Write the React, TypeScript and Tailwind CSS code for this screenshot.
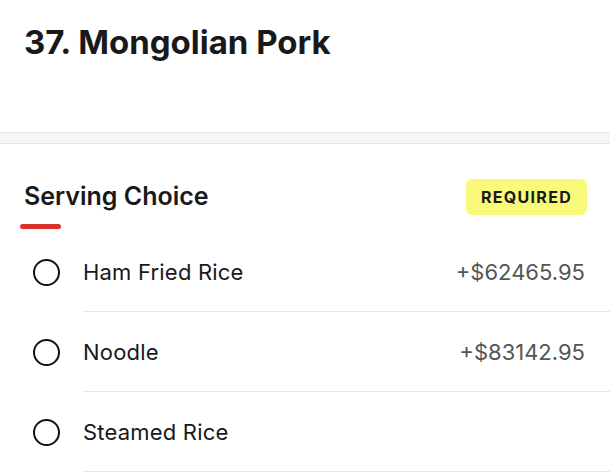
import React from 'react'

const options = [
  { name: 'Ham Fried Rice', price: '+$62465.95' },
  { name: 'Noodle', price: '+$83142.95' },
  { name: 'Steamed Rice', price: '' },
]

export default function App() {
  return (
    <div className="w-[610px] h-[475px] overflow-hidden bg-white text-[#191919] font-['Inter',sans-serif]">
      <div className="h-[132px] px-6 pt-[22px]">
        <h1 className="text-[33px] font-bold leading-[40px]">37. Mongolian Pork</h1>
      </div>
      <div className="h-[12px] bg-[#f6f6f6] border-y border-[#e4e4e4]" />
      <div className="flex items-start justify-between pl-6 pr-[23px] pt-[36px]">
        <div className="flex flex-col">
          <h2 className="text-[25px] font-semibold leading-[32px]">Serving Choice</h2>
          <div className="mt-[12px] -ml-1 w-[41px] h-[5px] rounded-full bg-[#d8322a]" />
        </div>
        <div className="-mt-[1px] w-[121px] h-[36px] rounded-md bg-[#fafa7a] flex items-center justify-center text-[16px] font-bold tracking-[1.3px]">
          REQUIRED
        </div>
      </div>
      <div className="mt-[3px]">
        {options.map(o => (
          <div key={o.name} className="flex items-center h-[80px]">
            <div className="w-[83px] flex justify-center pl-[10px] pr-[1px]">
              <span className="w-[27px] h-[27px] rounded-full border-[2.5px] border-[#111]" />
            </div>
            <div className="flex-1 h-full flex items-center justify-between pr-[25px] border-b border-[#e6e6e6]">
              <span className="text-[22px] leading-none tracking-[0.2px]">{o.name}</span>
              <span className="text-[22px] leading-none text-[#555]">{o.price}</span>
            </div>
          </div>
        ))}
      </div>
    </div>
  )
}
